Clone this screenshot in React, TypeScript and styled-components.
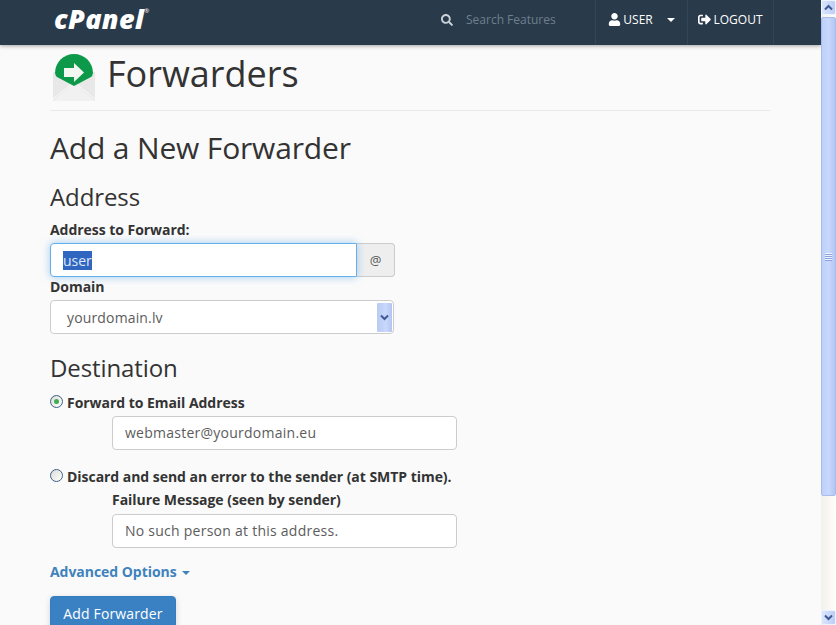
import React from 'react'
import styled, { createGlobalStyle } from 'styled-components'
import { FaSearch, FaUser, FaSignOutAlt } from 'react-icons/fa'

const GlobalStyle = createGlobalStyle`
  html, body { margin: 0; padding: 0; height: 100%; overflow: hidden; }
  body { background: #fafafa; font-family: "Open Sans", "Liberation Sans", sans-serif; color: #333; font-size: 14px; }
  * { box-sizing: border-box; }
`
const Page = styled.div`
  display: flex;
  width: 836px;
  height: 625px;
  overflow: hidden;
  background: #fff;
`
const Main = styled.div`
  flex: 0 0 821px;
  height: 625px;
  background: #fafafa;
  overflow: hidden;
`
const Navbar = styled.header`
  display: flex;
  align-items: stretch;
  height: 45px;
  padding-left: 54px;
  background: #293a4a;
  box-shadow: 0 1px 4px rgba(0, 0, 0, 0.35);
  color: #fff;
`
const Logo = styled.div`
  font-size: 27px;
  font-weight: 800;
  font-style: italic;
  letter-spacing: 0.35px;
  line-height: 37px;
  sup { font-size: 6px; font-weight: 400; font-style: normal; vertical-align: 16px; line-height: 0; }
`
const SearchBox = styled.div`
  display: flex;
  align-items: center;
  margin-left: auto;
  gap: 13px;
  width: 175px;
  padding: 0 0 6px 21px;
  font-size: 12px;
  color: #6f7f8e;
  svg { color: #c9d0d6; font-size: 12px; }
`
const NavItem = styled.div<{ $width: number }>`
  display: flex;
  align-items: center;
  justify-content: center;
  width: ${(p) => p.$width}px;
  gap: 2px;
  padding-bottom: 6px;
  border-left: 1px solid #31465a;
  font-size: 12px;
  svg { font-size: 13px; }
`
const Caret = styled.span<{ $color?: string }>`
  display: inline-block;
  width: 0;
  height: 0;
  margin-left: 12px;
  border-top: 4px solid ${(p) => p.$color || '#fff'};
  border-left: 4px solid transparent;
  border-right: 4px solid transparent;
`
const NavEnd = styled.div`
  width: 48px;
  border-left: 1px solid #31465a;
`
const Content = styled.main`
  width: 720px;
  margin-left: 50px;
`
const PageHeader = styled.div`
  display: flex;
  align-items: center;
  gap: 12px;
  height: 66px;
  padding: 7px 0 8px 3px;
  border-bottom: 1px solid #eaeaea;
`
const PageTitle = styled.h1`
  margin: 0 0 7px;
  font-size: 36px;
  font-weight: 400;
  line-height: 40px;
`
const SectionTitle = styled.h2`
  margin: 16px 0 0;
  font-size: 30px;
  font-weight: 400;
  letter-spacing: -0.16px;
  line-height: 42px;
`
const SubTitle = styled.h3<{ $top: number }>`
  margin: ${(p) => p.$top}px 0 0;
  font-size: 24px;
  font-weight: 400;
  letter-spacing: -0.1px;
  line-height: 34px;
`
const Label = styled.div<{ $indent?: boolean; $top?: number }>`
  margin: ${(p) => p.$top || 0}px 0 0 ${(p) => (p.$indent ? 62 : 0)}px;
  font-size: 14px;
  font-weight: 700;
  letter-spacing: -0.04px;
  line-height: 20px;
`
const InputGroup = styled.div`
  display: flex;
  width: 345px;
  height: 34px;
  margin-top: 3px;
`
const FocusedField = styled.div`
  flex: 1;
  padding-left: 12px;
  background: #fff;
  border: 1px solid #66afe9;
  border-radius: 4px 0 0 4px;
  box-shadow: 0 0 8px rgba(102, 175, 233, 0.6);
  line-height: 33px;
  color: #555;
  position: relative;
`
const Selected = styled.span`
  background: #3065c0;
  color: #dfe8f7;
  padding: 0;
`
const Addon = styled.div`
  width: 38px;
  background: #eee;
  border: 1px solid #ccc;
  border-left: 0;
  border-radius: 0 4px 4px 0;
  text-align: center;
  line-height: 32px;
  color: #555;
  font-size: 13px;
`
const SelectBox = styled.div`
  display: flex;
  justify-content: space-between;
  width: 344px;
  height: 34px;
  margin-top: 3px;
  padding: 1px 1px 1px 16px;
  background: #fff;
  border: 1px solid #ccc;
  border-radius: 4px;
  letter-spacing: 0.15px;
  line-height: 32px;
  color: #5c5c5c;
`
const SelectArrow = styled.div`
  display: flex;
  align-items: center;
  justify-content: center;
  width: 15px;
  margin-top: 1px;
  background: linear-gradient(to right, #b9cbf3, #c9d8fb 60%, #b2c5f0);
  border-radius: 1px;
`
const RadioRow = styled.div<{ $top: number }>`
  display: flex;
  align-items: center;
  gap: 4px;
  margin-top: ${(p) => p.$top}px;
  font-size: 14px;
  font-weight: 700;
  letter-spacing: -0.04px;
  line-height: 20px;
`
const Radio = styled.span<{ $on?: boolean }>`
  display: flex;
  align-items: center;
  justify-content: center;
  width: 13px;
  height: 13px;
  margin-top: -3px;
  border: 1px solid #3f5f88;
  border-radius: 50%;
  background: linear-gradient(135deg, #dcdcd6, #fff);
  &::after {
    content: '';
    display: ${(p) => (p.$on ? 'block' : 'none')};
    width: 5px;
    height: 5px;
    border-radius: 50%;
    background: #3fae52;
  }
`
const TextField = styled.div<{ $top: number }>`
  width: 345px;
  height: 34px;
  margin: ${(p) => p.$top}px 0 0 62px;
  padding-left: 12px;
  background: #fff;
  border: 1px solid #ccc;
  border-radius: 4px;
  letter-spacing: 0.25px;
  line-height: 32px;
  color: #5c5c5c;
`
const AdvancedLink = styled.div`
  display: flex;
  align-items: center;
  margin-top: 14px;
  font-weight: 700;
  letter-spacing: -0.04px;
  line-height: 20px;
  color: #3f82bd;
  ${Caret} { margin-left: 5px; margin-top: 2px; }
`
const PrimaryButton = styled.button`
  display: block;
  width: 126px;
  height: 34px;
  margin-top: 14px;
  padding: 0;
  background: #3a81c4;
  border: 1px solid #357ebd;
  border-radius: 4px 4px 0 0;
  box-shadow: 0 2px 6px rgba(0, 0, 0, 0.15);
  color: #fff;
  font: 400 14px "Open Sans", sans-serif;
  letter-spacing: 0.15px;
`
const Scrollbar = styled.div`
  display: flex;
  flex-direction: column;
  flex: 0 0 15px;
  height: 625px;
  background: linear-gradient(to right, #f3f1ec, #fdfdfa);
`
const ScrollButton = styled.div`
  display: flex;
  align-items: center;
  justify-content: center;
  width: 15px;
  height: 15px;
  background: linear-gradient(to right, #dbe5fc, #bccdf6);
  border: 1px solid #eef3fe;
  border-radius: 2px;
`
const ScrollThumb = styled.div`
  display: flex;
  align-items: center;
  justify-content: center;
  width: 15px;
  height: 479px;
  margin-top: 2px;
  background: linear-gradient(to right, #bdd0fb, #c9d8fc 50%, #b3c7f4);
  border: 1px solid #a9bde8;
  border-radius: 2px;
`
const ThumbGrip = styled.div`
  width: 7px;
  height: 8px;
  background: repeating-linear-gradient(to bottom, #eef3ff 0 1px, #8ba5dc 1px 2px);
`
const ScrollTrack = styled.div`
  flex: 1;
`

function Chevron({ down, color }: { down?: boolean; color: string }) {
  return (
    <svg width="9" height="7" viewBox="0 0 9 7">
      <path d={down ? 'M1 1.5 L4.5 5 L8 1.5' : 'M1 5.5 L4.5 2 L8 5.5'} fill="none" stroke={color} strokeWidth="2" />
    </svg>
  )
}

function ForwardIcon() {
  return (
    <svg width="42" height="48" viewBox="0 0 42 48">
      <path d="M0 19 H42 V48 H0 Z" fill="#e8e8e8" />
      <path d="M0 48 L21 30 L42 48 Z" fill="#f1f1f1" />
      <path d="M0 46 L21 29 L42 46" fill="none" stroke="#fafafa" strokeWidth="1" />
      <path d="M2 20 A19 19 0 0 1 40 20 Q39.5 23 38 24 L21 33 L4 24 Q2.5 23 2 20 Z" fill="#0c9a4a" />
      <path d="M11 15 H21 V10 L31 19.5 L21 29 V24 H11 Z" fill="#f2f7f2" />
    </svg>
  )
}

export default function App() {
  return (
    <Page>
      <GlobalStyle />
      <Main>
        <Navbar>
          <Logo>cPanel<sup>®</sup></Logo>
          <SearchBox>
            <FaSearch />
            Search Features
          </SearchBox>
          <NavItem $width={92}>
            <FaUser />
            USER
            <Caret />
          </NavItem>
          <NavItem $width={86}>
            <FaSignOutAlt />
            LOGOUT
          </NavItem>
          <NavEnd />
        </Navbar>
        <Content>
          <PageHeader>
            <ForwardIcon />
            <PageTitle>Forwarders</PageTitle>
          </PageHeader>
          <SectionTitle>Add a New Forwarder</SectionTitle>
          <SubTitle $top={11}>Address</SubTitle>
          <Label $top={6}>Address to Forward:</Label>
          <InputGroup>
            <FocusedField><Selected>user</Selected></FocusedField>
            <Addon>@</Addon>
          </InputGroup>
          <Label>Domain</Label>
          <SelectBox>
            yourdomain.lv
            <SelectArrow><Chevron down color="#3f5a94" /></SelectArrow>
          </SelectBox>
          <SubTitle $top={17}>Destination</SubTitle>
          <RadioRow $top={8}>
            <Radio $on />
            Forward to Email Address
          </RadioRow>
          <TextField $top={3}>webmaster@yourdomain.eu</TextField>
          <RadioRow $top={17}>
            <Radio />
            Discard and send an error to the sender (at SMTP time).
          </RadioRow>
          <Label $indent $top={3}>Failure Message (seen by sender)</Label>
          <TextField $top={4}>No such person at this address.</TextField>
          <AdvancedLink>Advanced Options<Caret $color="#3f82bd" /></AdvancedLink>
          <PrimaryButton>Add Forwarder</PrimaryButton>
        </Content>
      </Main>
      <Scrollbar>
        <ScrollButton><Chevron color="#3f5a94" /></ScrollButton>
        <ScrollThumb><ThumbGrip /></ScrollThumb>
        <ScrollTrack />
        <ScrollButton><Chevron down color="#3f5a94" /></ScrollButton>
      </Scrollbar>
    </Page>
  )
}
